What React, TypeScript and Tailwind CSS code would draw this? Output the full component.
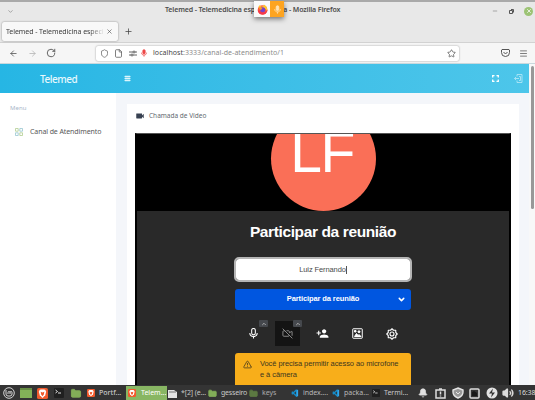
import React from "react";
import {
  ArrowLeft, ArrowRight, Bell, ChevronDown, ChevronUp, File, Folder, Maximize,
  Menu, Minus, Plus, RotateCw, Shield, Star, TriangleAlert, VideoOff, X, Volume2,
} from "lucide-react";
import { MdPersonAddAlt1, MdVideocam } from "react-icons/md";

const noto = "font-['Noto_Sans',sans-serif]";
const sans = "font-['Liberation_Sans',sans-serif]";

function Firefox() {
  return (
    <svg className="size-[11px]" viewBox="0 0 24 24">
      <circle cx="12" cy="13" r="10.5" fill="#ff5a36" />
      <path d="M3 7 6 2l3 4 5-1 1-4c6 3 9 9 7 14-5-6-9-8-15-7z" fill="#ffc62e" />
      <path d="M2 13c0 6 4 10 10 10 7 0 11-5 11-11-3 5-7 7-11 6z" fill="#f5364c" />
      <circle cx="12.5" cy="12.5" r="5.5" fill="#7542c9" />
      <path d="M4 9c4-2 6-1 8 1l-4 3z" fill="#ff9a22" />
    </svg>
  );
}

function MicIcon({ className }: { className: string }) {
  return (
    <svg className={className} viewBox="0 0 24 24" fill="none" stroke="currentColor" strokeWidth="2.3">
      <rect x="8.5" y="2" width="7" height="13" rx="3.5" fill="currentColor" />
      <path d="M4.5 11c0 10 15 10 15 0M12 19v4" />
    </svg>
  );
}

function TitleBar() {
  return (
    <div className="relative flex h-[18px] shrink-0 items-center bg-[#e8e8e8]">
      <ChevronDown className="ml-[7px] size-[7px] text-[#777]" />
      <div className={`${noto} absolute left-[165px] top-[3px] whitespace-nowrap text-[7px] font-semibold leading-[10px] tracking-[-0.13px] text-[#4c4c4c]`}>
        Telemed - Telemedicina especializada - Mozilla Firefox
      </div>
      <div className="absolute left-[254px] -top-px z-10 flex h-4 w-[30px] shadow-[0_2px_5px_rgba(0,0,0,0.5)]">
        <div className="flex w-4 items-center justify-center bg-[#fafafa]"><Firefox /></div>
        <div className="flex flex-1 items-center justify-center bg-[#fda421]">
          <MicIcon className="size-[9px] text-[#ffe3b5]" />
        </div>
      </div>
      <Minus className="ml-auto size-[6px] text-[#666]" />
      <svg className="ml-[11px] size-[5px]" viewBox="0 0 5 5" fill="none" stroke="#555"><path d="M.5 1.5h3v3h-3zM2 .5h2.5v3" /></svg>
      <div className="ml-[10px] mr-[2px] flex size-[9px] items-center justify-center rounded-full bg-[#9cc374]">
        <X className="size-[6px] text-white" strokeWidth={3} />
      </div>
    </div>
  );
}

function Tabs() {
  return (
    <div className="flex h-[23px] shrink-0 border-b border-[#d2d2d2] bg-[#e8e8e8] pl-[2px] pt-[2px]">
      <div className="flex h-[19px] w-[116px] items-center rounded-[2px] bg-[#f8f8f8] pl-1 shadow-[0_0_2px_rgba(0,0,0,0.45)]">
        <div className={`${noto} w-[99px] overflow-hidden whitespace-nowrap text-[7px] leading-[10px] tracking-[-0.07px] text-[#3d3d3d] [mask-image:linear-gradient(90deg,#000_84%,transparent)]`}>
          Telemed - Telemedicina especi
        </div>
        <X className="ml-px size-[7px] text-[#444]" />
      </div>
      <Plus className="ml-[6px] mt-[5px] size-[9px] text-[#444]" />
    </div>
  );
}

function Toolbar() {
  return (
    <div className="flex h-[21px] shrink-0 items-center border-b border-[#c9d8dd] bg-[#f6f6f6] text-[#4a4a4a]">
      <ArrowLeft className="ml-[9px] size-[9px]" />
      <ArrowRight className="ml-[10px] size-[9px] text-[#b0b0b0]" />
      <RotateCw className="ml-[9px] size-[10px]" />
      <div className="ml-[40px] flex h-[15px] w-[363px] items-center rounded-[2px] bg-white pl-1 shadow-[0_0_2px_rgba(0,0,0,0.4)]">
        <Shield className="size-[9px] text-[#666]" />
        <File className="ml-[5px] size-[9px] text-[#555]" />
        <svg className="ml-[6px] h-[7px] w-2" viewBox="0 0 8 7" fill="none" stroke="#555" strokeWidth=".9"><path d="M0 2h4M6 2h2M0 5h2M4 5h4" /><circle cx="5" cy="2" r="1" /><circle cx="3" cy="5" r="1" /></svg>
        <MicIcon className="ml-[3px] size-2 text-[#ee4747]" />
        <div className={`${noto} ml-[5px] whitespace-nowrap text-[7px] leading-[10px] tracking-[0.05px] text-[#8b8b8b]`}>
          <span className="text-[#454545]">localhost</span>:3333/canal-de-atendimento/1
        </div>
        <Star className="ml-auto mr-[3px] size-[9px] text-[#555]" />
      </div>
      <svg className="ml-auto h-2 w-[9px]" viewBox="0 0 18 16" fill="none" stroke="#555" strokeWidth="2"><path d="M2 1h14l1 1v5a8 8 0 0 1-16 0V2zM5 6l4 4 4-4" /></svg>
      <Menu className="ml-[9px] mr-[7px] size-[9px] text-[#555]" />
    </div>
  );
}

function AppHeader() {
  return (
    <div className="flex h-[29px] shrink-0 items-center bg-gradient-to-r from-[#26b6e4] to-[#4dc6ea] text-white">
      <div className={`${noto} ml-10 w-[84px] text-[10px] font-medium leading-[14px] tracking-[-0.45px] text-[#e7f8fd]`}>Telemed</div>
      <Menu className="size-[7px] text-[#dcf5fc]" strokeWidth={5} />
      <svg className="ml-auto size-[7px]" viewBox="0 0 7 7" fill="none" stroke="#fff" strokeWidth="1.3"><path d="M.7 2.5V.7h1.8M4.5.7h1.8v1.8M6.3 4.5v1.8H4.5M2.5 6.3H.7V4.5" /></svg>
      <svg className="ml-[15px] mr-[6px] size-[9px]" viewBox="0 0 18 18" fill="none" stroke="#b4e7f7" strokeWidth="1.7"><path d="M6 5V1h10v16H6v-4M1 9h9M4 6 1 9l3 3M10 5h3v8h-3" /></svg>
    </div>
  );
}

function Sidebar() {
  return (
    <div className={`${noto} w-[116px] shrink-0 bg-white`}>
      <div className="ml-[10px] mt-[10px] text-[6px] leading-[10px] tracking-[0.1px] text-[#a7b6c9]">Menu</div>
      <div className="ml-[15px] mt-[14px] flex items-center">
        <svg className="size-2" viewBox="0 0 8 8" fill="none" strokeWidth=".7">
          <path d="M.5.5h2.7v2.7H.5zM4.8 4.8h2.7v2.7H4.8z" stroke="#a7c783" /><path d="M4.8.5h2.7v2.7H4.8zM.5 4.8h2.7v2.7H.5z" stroke="#8abfca" />
        </svg>
        <span className="ml-[7px] whitespace-nowrap text-[7px] leading-[10px] tracking-[-0.1px] text-[#585858]">Canal de Atendimento</span>
      </div>
    </div>
  );
}

function Gear() {
  return (
    <svg className="size-[12px]" viewBox="0 0 24 24" fill="none" stroke="#fff" strokeWidth="2.2" strokeLinejoin="round">
      <path d="m12 1.5 3 3h4.5V9l3 3-3 3v4.5H15l-3 3-3-3H4.5V15l-3-3 3-3V4.5H9z" />
      <circle cx="12" cy="12" r="4" />
    </svg>
  );
}

function Devices() {
  return (
    <div className="mt-[10px] flex h-[27px] w-[176px] text-white">
      <div className="relative flex w-9 items-center justify-center">
        <svg className="size-[11px]" viewBox="0 0 24 24" fill="none" stroke="#fff" strokeWidth="2.3"><rect x="8" y="1" width="8" height="14" rx="4" /><path d="M4 11c0 10 16 10 16 0M12 19v4" /></svg>
        <span className="absolute right-[3px] top-0 flex h-[7px] w-[9px] items-center justify-center rounded-[1px] bg-[#45484d]"><ChevronUp className="size-[6px] text-[#c5c5c5]" strokeWidth={3} /></span>
      </div>
      <div className="relative ml-[3px] flex w-[27px] items-center justify-center">
        <div className="flex h-[25px] w-[25px] items-center justify-center bg-[#141414]"><VideoOff className="size-[11px] text-[#929292]" /></div>
        <span className="absolute -right-px top-0 flex h-[7px] w-[9px] items-center justify-center rounded-[1px] bg-[#45484d]"><ChevronUp className="size-[6px] text-[#c5c5c5]" strokeWidth={3} /></span>
      </div>
      <div className="ml-[4px] flex w-[35px] items-center justify-center"><MdPersonAddAlt1 className="size-[13px] -scale-x-100" /></div>
      <div className="flex w-[35px] items-center justify-center">
        <svg className="size-[11px]" viewBox="0 0 22 22" fill="none" stroke="#fff" strokeWidth="2"><rect x="1.5" y="1.5" width="19" height="19" rx="1" /><path d="m5 17 4-6 3 4 2-2 4 4z" fill="#fff" /><circle cx="14" cy="7.5" r="2" fill="#fff" /><path d="M5 5h3v3H5z" fill="#fff" /></svg>
      </div>
      <div className="flex w-[34px] items-center justify-center"><Gear /></div>
    </div>
  );
}

function Meeting() {
  return (
    <div className={`${sans} ml-2 flex h-[260px] w-[376px] flex-col overflow-hidden border-2 border-b-0 border-black border-t-[#555] bg-[#292929] [border-top-width:1px]`}>
      <div className="flex h-[77px] shrink-0 items-end justify-center overflow-hidden bg-black">
        <div className="flex size-[105px] shrink-0 items-center justify-center rounded-full bg-[#fa6f57] text-[57px] leading-[57px] tracking-[-1.5px] text-white">
          <span className="relative -top-[6px] -left-px">LF</span>
        </div>
      </div>
      <div className="flex flex-col items-center">
        <div className="mt-[11px] whitespace-nowrap text-[15.5px] font-bold leading-[20px] tracking-[-0.38px] text-white">Participar da reunião</div>
        <div className="mt-[17px] flex h-[21px] w-[174px] items-center justify-center rounded-[3px] bg-white text-[7.5px] leading-[10px] tracking-[-0.1px] text-[#4a4a4a] outline outline-2 outline-[#b5b5b5] ring-1 ring-[#292929]">
          Luiz Fernando<span className="h-2 w-px bg-[#555]" />
        </div>
        <div className="relative mt-[9px] flex h-[21px] w-[176px] items-center justify-center rounded-[3px] bg-[#0056e0] pb-[2px] text-[7.5px] font-bold leading-[10px] tracking-[-0.1px] text-white">
          Participar da reunião
          <ChevronDown className="absolute right-[5px] top-[6px] size-[9px]" strokeWidth={4} />
        </div>
        <Devices />
        <div className="mt-[6px] flex h-[34px] w-[176px] rounded-t-[3px] bg-[#f8ae1a] pl-2 pt-[6px] text-[#40361f]">
          <TriangleAlert className="mt-px size-[9px]" />
          <div className="ml-2 whitespace-nowrap text-[7.5px] leading-[10.5px] tracking-[-0.07px]">Você precisa permitir acesso ao microfone<br />e à câmera</div>
        </div>
      </div>
    </div>
  );
}

function Brave() {
  return (
    <svg className="size-full" viewBox="0 0 12 12"><rect width="12" height="12" rx="2" fill="#f15a2d" /><path d="m3 2 1.5-.5h3L9 2l1 2-1 4-3 3-3-3-1-4z" fill="#fff" /><path d="m4 4 2 1 2-1-.5 3L6 9 4.5 7z" fill="#f15a2d" /></svg>
  );
}

function Terminal() {
  return <svg className="size-full" viewBox="0 0 10 10"><rect width="10" height="10" rx="1" fill="#202020" /><path d="m1.5 2 2 1.5-2 1.5M4 5h3" fill="none" stroke="#ddd" /></svg>;
}

function Code() {
  return <svg className="size-full" viewBox="0 0 10 10" fill="none" stroke="#168bc8" strokeWidth="1.8"><path d="M7 1v8L1 3.5M7 1 1 6.5" /><path d="M8 1v8" stroke="#35a5e8" /></svg>;
}

function Taskbar() {
  const label = "whitespace-nowrap text-[7px] leading-[10px]";
  return (
    <div className={`${noto} flex h-[15px] shrink-0 items-center overflow-hidden bg-[#343434] pt-px text-[#ddd]`}>
      <svg className="ml-[3px] size-3 shrink-0" viewBox="0 0 12 12" fill="none" stroke="#d5d5d5"><circle cx="6" cy="6" r="5.3" /><path d="M3 3v4q0 2 2 2h2q2 0 2-2V5.5q0-1-1-1t-1 1V7M7 5.5q0-1-1-1t-1 1V7" /></svg>
      <div className="ml-[5px] h-[10px] w-3 shrink-0 border-t-2 border-[#678d44] bg-[#83b158]" />
      <div className="ml-[5px] size-[11px] shrink-0"><Brave /></div>
      <div className="ml-[6px] size-[10px] shrink-0"><Terminal /></div>
      <Folder className="ml-[6px] h-[11px] w-[12px] shrink-0 fill-[#82ad58] text-[#82ad58]" />
      <div className="ml-[5px] size-2 shrink-0"><Brave /></div>
      <div className={`${label} ml-[4px] w-[27px] shrink-0 font-medium text-[#c9c9c9]`}>Portf...</div>
      <div className="flex h-full w-[41px] shrink-0 items-center bg-[#88b663] pl-[2px]">
        <div className="size-2"><Brave /></div><span className="ml-[5px] whitespace-nowrap text-[7px] leading-[10px] text-white">Telem...</span>
      </div>
      <svg className="ml-px size-[9px] shrink-0" viewBox="0 0 9 9"><path d="M0 1h6l3 2v6H0z" fill="#e4e4e4" /><path d="M1 3h7" stroke="#777" /></svg>
      <div className={`${label} ml-1 w-[27px] shrink-0 tracking-[-0.1px] text-[#c9c9c9]`}>*[2] (e...</div>
      <Folder className="size-[9px] shrink-0 fill-[#82ad58] text-[#82ad58]" />
      <div className={`${label} ml-1 w-7 shrink-0 tracking-[-0.2px] text-[#c9c9c9]`}>gesseiro</div>
      <Folder className="size-[9px] shrink-0 fill-[#5c7942] text-[#5c7942]" />
      <div className={`${label} ml-[4px] w-[29px] shrink-0 text-[#aaa]`}>keys</div>
      <div className="size-2 shrink-0"><Code /></div>
      <div className={`${label} ml-[4px] w-[29px] shrink-0 tracking-[-0.05px] text-[#b9b9b9]`}>index....</div>
      <div className="size-2 shrink-0"><Code /></div>
      <div className={`${label} ml-[4px] w-7 shrink-0 text-[#b9b9b9]`}>packa...</div>
      <div className="size-2 shrink-0"><Terminal /></div>
      <div className={`${label} ml-[4px] w-[34px] shrink-0 text-[#c9c9c9]`}>Termi...</div>
      <Bell className="size-[10px] shrink-0 fill-[#e2e2e2]" />
      <svg className="ml-[7px] size-[11px] shrink-0" viewBox="0 0 11 11" fill="none" stroke="#ddd" strokeWidth="1.5"><path d="M1 2h9v8H1zM4 1h3M5.5 3.5v3M5.5 7.5v1" /></svg>
      <svg className="ml-[6px] size-3 shrink-0" viewBox="0 0 12 12" fill="#999" stroke="#e5e5e5" strokeWidth="1.4"><path d="m6 1 5 2v2q0 4-5 6Q1 9 1 5V3z" /><path d="m4 5 2 2 2-2" strokeWidth="1" /></svg>
      <svg className="ml-[5px] size-[11px] shrink-0" viewBox="0 0 11 11"><rect x="1" y="1" width="9" height="9" rx="1" fill="none" stroke="#ddd" strokeWidth="1.5" /><path d="M3 8V4l2-1 3 2v3z" fill="#191919" /></svg>
      <svg className="ml-[6px] size-3 shrink-0" viewBox="0 0 12 12"><circle cx="6" cy="6" r="5.5" fill="#e3e3e3" /><path d="M7 1.5 3 6.5h3l-1 4 4-5H6z" fill="#333" /></svg>
      <Volume2 className="ml-[4px] size-3 shrink-0 fill-[#ddd]" strokeWidth={2.5} />
      <div className="ml-[4px] shrink-0 text-[7px] leading-[10px] tracking-[-0.1px]">16:38</div>
    </div>
  );
}

export default function App() {
  return (
    <div className="flex h-[400px] w-[535px] flex-col overflow-hidden bg-white">
      <div className="h-[2px] shrink-0 bg-[#a9a9a9]" />
      <TitleBar /><Tabs /><Toolbar />
      <div className="flex h-[321px]">
        <div className="w-[529px] shrink-0">
          <AppHeader />
          <div className="flex h-[292px] bg-[#f4f6fa]">
            <Sidebar />
            <div className="ml-[11px] mt-[11px] h-[281px] w-[392px] bg-white">
              <div className={`${noto} flex h-[21px] items-center pl-2 pt-[2px] text-[6.5px] leading-[10px] tracking-[0px] text-[#626970]`}>
                <MdVideocam className="mr-[4px] size-[10px] text-[#374151]" />Chamada de Vídeo
              </div>
              <div className="h-2" />
              <Meeting />
            </div>
          </div>
        </div>
        <div className="flex flex-1 justify-end bg-[#f8f8f8] pr-[1px] pt-[2px]">
          <div className="h-[143px] w-[3px] rounded-full bg-[#989898]" />
        </div>
      </div>
      <Taskbar />
    </div>
  );
}
